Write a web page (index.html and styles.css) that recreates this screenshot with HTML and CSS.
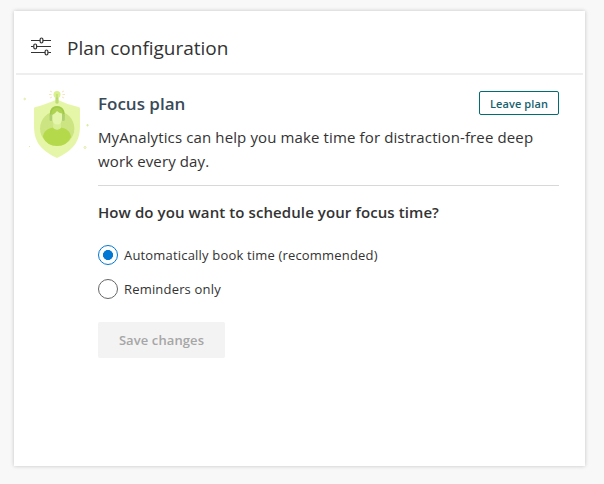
FILE: index.html
```html
<!DOCTYPE html>
<html lang="en">
<head>
<meta charset="utf-8">
<title>Plan configuration</title>
<link rel="stylesheet" href="styles.css">
</head>
<body>
<main class="card">
  <header class="card-header">
    <svg class="sliders" width="20" height="20" viewBox="0 0 20 20" fill="none" stroke="#333" stroke-width="1.2">
      <path d="M0 3.500h9M12 3.500h8M0 9.500h2.600M6 9.500h14M0 15.500h14M17.200 15.500H20"/>
      <rect x="9.100" y="1" width="2.800" height="5" rx="1.400"/>
      <rect x="2.800" y="7" width="2.800" height="5" rx="1.400"/>
      <rect x="14.100" y="13" width="2.800" height="5" rx="1.400"/>
    </svg>
    <h1 class="title">Plan configuration</h1>
  </header>
  <div class="content">
    <svg class="shield" width="68" height="70" viewBox="0 0 68 70">
      <path d="M37 9.500Q24 15 14.700 17.200Q14 17.500 14 19V36C14 51 20 60 37 68C54 60 60 51 60 36V19Q60 17.500 59.300 17.200Q48 15 37 9.500Z" fill="#e6f6a8"/>
      <circle cx="37.200" cy="38.500" r="17.200" fill="#cde482"/>
      <path d="M30 26C29 20 32 16 37 16S45.500 20 44.500 26L42 29H32Z" fill="#aed352"/>
      <rect x="29.500" y="24" width="3" height="7" rx="1.500" fill="#afcf73"/>
      <rect x="41.800" y="24" width="3" height="7" rx="1.500" fill="#afcf73"/>
      <path d="M22.900 47C23.500 41 28 38.500 33 37.500Q37 41 41 37.500C46 38.500 50.500 41 51 47Q47 56 37 56T22.900 47Z" fill="#b4d94b"/>
      <path d="M33.200 31h7.800v7q-3.900 3.500-7.800 0Z" fill="#d8ee96"/>
      <path d="M32.300 25Q35.500 23.500 37 21Q39 23 42 23.500V29Q41.500 34.500 37.200 34.500T32.300 29Z" fill="#e4f6ab"/>
      <path d="M30.500 24.500Q31 17 37 17T43.800 24" fill="none" stroke="#a1c94a" stroke-width="1.300"/>
      <circle cx="37" cy="4.500" r="3.500" fill="#d9f08d"/>
      <path d="M35.400 7.500h3.200v5.500q-1.600 1.500-3.200 0Z" fill="#bddc73"/>
      <path d="M37 4v5" stroke="#b4d56a" stroke-width="1"/>
      <path d="M32 2l-2-1M31.500 4.500h-2.500M32 7l-2 1M42 2l2-1M42.500 4.500H45M42 7l2 1" stroke="#f8dfb4" stroke-width=".9"/>
      <g fill="none" stroke="#d8ec9b" stroke-width=".9">
        <circle cx="4.700" cy="9" r=".8"/><circle cx="65" cy="57.500" r="1"/>
        <path d="M67.500 34v2.500M66.300 35.200h2.500M9.500 56v1"/>
      </g>
    </svg>
    <section class="plan">
      <div class="plan-heading">
        <h2 class="plan-name">Focus plan</h2>
        <button class="leave">Leave plan</button>
      </div>
      <p class="description">MyAnalytics can help you make time for distraction-free deep<br>work every day.</p>
      <h3 class="question">How do you want to schedule your focus time?</h3>
      <label class="choice"><input class="radio" type="radio" name="mode" checked><span>Automatically book time (recommended)</span></label>
      <label class="choice"><input class="radio" type="radio" name="mode"><span>Reminders only</span></label>
      <button class="save" disabled>Save changes</button>
    </section>
  </div>
</main>
</body>
</html>
```
FILE: styles.css
```css
* { box-sizing: border-box; }
body {
  margin: 0;
  padding: 11px 19px 18px 14px;
  background: #f8f8f8;
  color: #333;
  font-family: "Open Sans", "Noto Sans", sans-serif;
}
h1, h2, h3, p { margin: 0; }
.card {
  width: 571px;
  height: 455px;
  padding: 0 2px;
  background: #fff;
  box-shadow: 0 0 4px rgba(0, 0, 0, .22);
}
.card-header {
  display: flex;
  align-items: center;
  height: 64px;
  padding: 10px 0 0 15px;
  border-bottom: 2px solid #eee;
}
.sliders { flex: none; margin: -1px 16px 0 0; }
.title {
  font-size: 19px;
  font-weight: 400;
  line-height: 26px;
  letter-spacing: -.02px;
  margin-top: 1px;
}
.content { display: flex; padding: 15px 24px 0 4px; }
.shield { flex: none; margin-right: 10px; overflow: visible; }
.plan { width: 461px; }
.plan-heading {
  display: flex;
  justify-content: space-between;
  align-items: flex-start;
  height: 35px;
  padding-top: 1px;
}
.plan-name {
  margin-top: 1px;
  color: #394b59;
  font-size: 17px;
  font-weight: 600;
  line-height: 24px;
}
.leave {
  width: 80px;
  height: 24px;
  padding: 1px 0 0;
  border: 1px solid #006d75;
  border-radius: 2px;
  background: #fff;
  color: #17616e;
  font: 600 11px/20px "Open Sans", sans-serif;
  letter-spacing: .1px;
}
.description {
  height: 61px;
  border-bottom: 1px solid #d8d8d8;
  font-size: 15px;
  line-height: 24px;
  letter-spacing: .125px;
}
.question {
  margin: 14px 0 21px;
  font-size: 15px;
  font-weight: 600;
  line-height: 24px;
  letter-spacing: .09px;
}
.choice {
  display: flex;
  align-items: center;
  height: 20px;
  margin-bottom: 14px;
  font-size: 13px;
  line-height: 20px;
  letter-spacing: .18px;
}
.radio {
  appearance: none;
  flex: none;
  width: 20px;
  height: 20px;
  margin: 0 6px 0 0;
  border: 1px solid #666;
  border-radius: 50%;
}
.radio:checked {
  border-color: #0078d4;
  background: radial-gradient(circle, #0078d4 4.700px, #fff 5.300px);
}
.save {
  width: 127px;
  height: 36px;
  margin-top: 9px;
  padding: 0;
  border: 0;
  border-radius: 2px;
  background: #f3f3f3;
  color: #a6a6a6;
  font: 600 13px/20px "Open Sans", sans-serif;
  letter-spacing: .1px;
}
```
